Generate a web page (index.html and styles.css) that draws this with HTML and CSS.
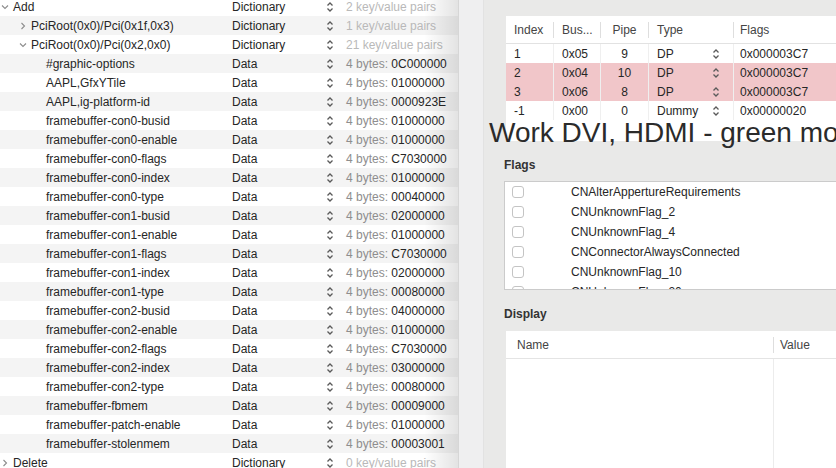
FILE: index.html
```html
<!DOCTYPE html>
<html lang="en">
<head>
    <meta charset="UTF-8">
    <title>Device Properties</title>
    <link rel="stylesheet" href="styles.css">
</head>
<body>
    <svg class="defs" width="0" height="0">
        <symbol id="updown" viewBox="0 0 8 12">
            <polyline points="1.5,4.5 4,2 6.5,4.5" fill="none" stroke="#5a5a5a" stroke-width="1.3"/>
            <polyline points="1.5,7.5 4,10 6.5,7.5" fill="none" stroke="#5a5a5a" stroke-width="1.3"/>
        </symbol>
        <symbol id="chev-right" viewBox="0 0 8 8">
            <polyline points="2.5,1 5.5,4 2.5,7" fill="none" stroke="#8c8c8c" stroke-width="1.1"/>
        </symbol>
        <symbol id="chev-down" viewBox="0 0 8 8">
            <polyline points="1,2.5 4,5.5 7,2.5" fill="none" stroke="#8c8c8c" stroke-width="1.1"/>
        </symbol>
    </svg>

    <div class="plist">
        <div class="row">
            <div class="key lvl0"><svg class="chev"><use href="#chev-down"/></svg>Add</div>
            <div class="type">Dictionary</div>
            <div class="step"><svg><use href="#updown"/></svg></div>
            <div class="val faint">2 key/value pairs</div>
        </div>
        <div class="row">
            <div class="key lvl1"><svg class="chev"><use href="#chev-right"/></svg>PciRoot(0x0)/Pci(0x1f,0x3)</div>
            <div class="type">Dictionary</div>
            <div class="step"><svg><use href="#updown"/></svg></div>
            <div class="val faint">1 key/value pairs</div>
        </div>
        <div class="row">
            <div class="key lvl1"><svg class="chev"><use href="#chev-down"/></svg>PciRoot(0x0)/Pci(0x2,0x0)</div>
            <div class="type">Dictionary</div>
            <div class="step"><svg><use href="#updown"/></svg></div>
            <div class="val faint">21 key/value pairs</div>
        </div>
        <div class="row">
            <div class="key lvl2">#graphic-options</div>
            <div class="type">Data</div>
            <div class="step"><svg><use href="#updown"/></svg></div>
            <div class="val"><span class="dim">4 bytes:</span> 0C000000</div>
        </div>
        <div class="row">
            <div class="key lvl2">AAPL,GfxYTile</div>
            <div class="type">Data</div>
            <div class="step"><svg><use href="#updown"/></svg></div>
            <div class="val"><span class="dim">4 bytes:</span> 01000000</div>
        </div>
        <div class="row">
            <div class="key lvl2">AAPL,ig-platform-id</div>
            <div class="type">Data</div>
            <div class="step"><svg><use href="#updown"/></svg></div>
            <div class="val"><span class="dim">4 bytes:</span> 0000923E</div>
        </div>
        <div class="row">
            <div class="key lvl2">framebuffer-con0-busid</div>
            <div class="type">Data</div>
            <div class="step"><svg><use href="#updown"/></svg></div>
            <div class="val"><span class="dim">4 bytes:</span> 01000000</div>
        </div>
        <div class="row">
            <div class="key lvl2">framebuffer-con0-enable</div>
            <div class="type">Data</div>
            <div class="step"><svg><use href="#updown"/></svg></div>
            <div class="val"><span class="dim">4 bytes:</span> 01000000</div>
        </div>
        <div class="row">
            <div class="key lvl2">framebuffer-con0-flags</div>
            <div class="type">Data</div>
            <div class="step"><svg><use href="#updown"/></svg></div>
            <div class="val"><span class="dim">4 bytes:</span> C7030000</div>
        </div>
        <div class="row">
            <div class="key lvl2">framebuffer-con0-index</div>
            <div class="type">Data</div>
            <div class="step"><svg><use href="#updown"/></svg></div>
            <div class="val"><span class="dim">4 bytes:</span> 01000000</div>
        </div>
        <div class="row">
            <div class="key lvl2">framebuffer-con0-type</div>
            <div class="type">Data</div>
            <div class="step"><svg><use href="#updown"/></svg></div>
            <div class="val"><span class="dim">4 bytes:</span> 00040000</div>
        </div>
        <div class="row">
            <div class="key lvl2">framebuffer-con1-busid</div>
            <div class="type">Data</div>
            <div class="step"><svg><use href="#updown"/></svg></div>
            <div class="val"><span class="dim">4 bytes:</span> 02000000</div>
        </div>
        <div class="row">
            <div class="key lvl2">framebuffer-con1-enable</div>
            <div class="type">Data</div>
            <div class="step"><svg><use href="#updown"/></svg></div>
            <div class="val"><span class="dim">4 bytes:</span> 01000000</div>
        </div>
        <div class="row">
            <div class="key lvl2">framebuffer-con1-flags</div>
            <div class="type">Data</div>
            <div class="step"><svg><use href="#updown"/></svg></div>
            <div class="val"><span class="dim">4 bytes:</span> C7030000</div>
        </div>
        <div class="row">
            <div class="key lvl2">framebuffer-con1-index</div>
            <div class="type">Data</div>
            <div class="step"><svg><use href="#updown"/></svg></div>
            <div class="val"><span class="dim">4 bytes:</span> 02000000</div>
        </div>
        <div class="row">
            <div class="key lvl2">framebuffer-con1-type</div>
            <div class="type">Data</div>
            <div class="step"><svg><use href="#updown"/></svg></div>
            <div class="val"><span class="dim">4 bytes:</span> 00080000</div>
        </div>
        <div class="row">
            <div class="key lvl2">framebuffer-con2-busid</div>
            <div class="type">Data</div>
            <div class="step"><svg><use href="#updown"/></svg></div>
            <div class="val"><span class="dim">4 bytes:</span> 04000000</div>
        </div>
        <div class="row">
            <div class="key lvl2">framebuffer-con2-enable</div>
            <div class="type">Data</div>
            <div class="step"><svg><use href="#updown"/></svg></div>
            <div class="val"><span class="dim">4 bytes:</span> 01000000</div>
        </div>
        <div class="row">
            <div class="key lvl2">framebuffer-con2-flags</div>
            <div class="type">Data</div>
            <div class="step"><svg><use href="#updown"/></svg></div>
            <div class="val"><span class="dim">4 bytes:</span> C7030000</div>
        </div>
        <div class="row">
            <div class="key lvl2">framebuffer-con2-index</div>
            <div class="type">Data</div>
            <div class="step"><svg><use href="#updown"/></svg></div>
            <div class="val"><span class="dim">4 bytes:</span> 03000000</div>
        </div>
        <div class="row">
            <div class="key lvl2">framebuffer-con2-type</div>
            <div class="type">Data</div>
            <div class="step"><svg><use href="#updown"/></svg></div>
            <div class="val"><span class="dim">4 bytes:</span> 00080000</div>
        </div>
        <div class="row">
            <div class="key lvl2">framebuffer-fbmem</div>
            <div class="type">Data</div>
            <div class="step"><svg><use href="#updown"/></svg></div>
            <div class="val"><span class="dim">4 bytes:</span> 00009000</div>
        </div>
        <div class="row">
            <div class="key lvl2">framebuffer-patch-enable</div>
            <div class="type">Data</div>
            <div class="step"><svg><use href="#updown"/></svg></div>
            <div class="val"><span class="dim">4 bytes:</span> 01000000</div>
        </div>
        <div class="row">
            <div class="key lvl2">framebuffer-stolenmem</div>
            <div class="type">Data</div>
            <div class="step"><svg><use href="#updown"/></svg></div>
            <div class="val"><span class="dim">4 bytes:</span> 00003001</div>
        </div>
        <div class="row">
            <div class="key lvl0"><svg class="chev"><use href="#chev-right"/></svg>Delete</div>
            <div class="type">Dictionary</div>
            <div class="step"><svg><use href="#updown"/></svg></div>
            <div class="val faint">0 key/value pairs</div>
        </div>
    </div>

    <div class="gutter"></div>

    <div class="editor">
        <div class="ports">
            <div class="prow head">
                <div class="c-index">Index</div>
                <div class="c-bus">Bus...</div>
                <div class="c-pipe">Pipe</div>
                <div class="c-type">Type</div>
                <div class="c-flags">Flags</div>
            </div>
            <div class="prow">
                <div class="c-index">1</div>
                <div class="c-bus">0x05</div>
                <div class="c-pipe">9</div>
                <div class="c-type">DP<svg><use href="#updown"/></svg></div>
                <div class="c-flags">0x000003C7</div>
            </div>
            <div class="prow marked">
                <div class="c-index">2</div>
                <div class="c-bus">0x04</div>
                <div class="c-pipe">10</div>
                <div class="c-type">DP<svg><use href="#updown"/></svg></div>
                <div class="c-flags">0x000003C7</div>
            </div>
            <div class="prow marked">
                <div class="c-index">3</div>
                <div class="c-bus">0x06</div>
                <div class="c-pipe">8</div>
                <div class="c-type">DP<svg><use href="#updown"/></svg></div>
                <div class="c-flags">0x000003C7</div>
            </div>
            <div class="prow">
                <div class="c-index">-1</div>
                <div class="c-bus">0x00</div>
                <div class="c-pipe">0</div>
                <div class="c-type">Dummy<svg><use href="#updown"/></svg></div>
                <div class="c-flags">0x00000020</div>
            </div>
        </div>

        <div class="note">Work DVI, HDMI - green mo</div>

        <div class="section-title">Flags</div>
        <div class="flags">
            <label class="flag"><span class="check"></span>CNAlterAppertureRequirements</label>
            <label class="flag"><span class="check"></span>CNUnknownFlag_2</label>
            <label class="flag"><span class="check"></span>CNUnknownFlag_4</label>
            <label class="flag"><span class="check"></span>CNConnectorAlwaysConnected</label>
            <label class="flag"><span class="check"></span>CNUnknownFlag_10</label>
            <label class="flag"><span class="check"></span>CNUnknownFlag_20</label>
        </div>

        <div class="section-title display-title">Display</div>
        <div class="display">
            <div class="drow head">
                <div class="d-name">Name</div>
                <div class="d-value">Value</div>
            </div>
            <div class="drow body">
                <div class="d-name"></div>
                <div class="d-value"></div>
            </div>
        </div>
    </div>
</body>
</html>
```

FILE: styles.css
```css
body {
    margin: 0;
    height: 468px;
    display: flex;
    overflow: hidden;
    font-family: "Liberation Sans", Arial, sans-serif;
    font-size: 12px;
    color: #262626;
    background: #e9e9e8;
}

.defs {
    position: absolute;
}

/* left: plist tree */
.plist {
    position: relative;
    width: 458px;
    flex: none;
    margin-top: -3px;
    background: #fff;
    border-right: 1px solid #d6d6d6;
}

.plist::after {
    content: "";
    position: absolute;
    top: 0;
    right: 0;
    bottom: 0;
    width: 34px;
    background: linear-gradient(to right, rgba(0, 0, 0, 0), rgba(0, 0, 0, 0.11));
}

.row {
    height: 19px;
    display: grid;
    grid-template-columns: 232px 94px 20px 1fr;
    align-items: center;
    white-space: nowrap;
}

.row:nth-child(even) {
    background: #f4f4f4;
}

.key {
    display: flex;
    align-items: center;
}

.chev {
    width: 8px;
    height: 8px;
    margin-right: 4px;
}

.lvl0 { padding-left: 1px; }
.lvl1 { padding-left: 19px; }
.lvl2 { padding-left: 46px; }

.step svg {
    display: block;
    width: 8px;
    height: 12px;
}

.val .dim {
    color: #8e8e8e;
}

.val.faint {
    color: #b9b9b9;
}

.gutter {
    width: 24px;
    flex: none;
    background: #efeff0;
    border-right: 1px solid #e2e2e2;
}

/* right: editor */
.editor {
    position: relative;
    flex: 1;
    padding: 16px 0 0 20px;
    display: flex;
    flex-direction: column;
    min-width: 0;
    overflow: hidden;
}

.ports {
    margin-left: 2px;
    margin-right: -30px;
    height: 125px;
    background: #fff;
    flex: none;
}

.prow {
    height: 19px;
    display: grid;
    grid-template-columns: 48px 47px 48px 85px 1fr;
    align-items: center;
    white-space: nowrap;
}

.prow > div {
    height: 100%;
    display: flex;
    align-items: center;
    padding-left: 8px;
    border-right: 1px solid #efefef;
}

.prow > div:last-child {
    border-right: none;
}

.prow.head {
    height: 27px;
    color: #444;
    border-bottom: 1px solid #e2e2e2;
}

.prow.head > div {
    height: 16px;
    border-right-color: #dedede;
}

.prow .c-pipe {
    justify-content: center;
    padding-left: 0;
}

.prow .c-type {
    justify-content: space-between;
    padding-right: 13px;
}

.c-type svg {
    width: 8px;
    height: 12px;
}

.prow .c-flags {
    padding-left: 6px;
}

.prow.marked {
    background: #f1c6c9;
}

.note {
    position: absolute;
    left: 5px;
    top: 117px;
    font-size: 28px;
    line-height: 32px;
    color: #2b2b2b;
    white-space: nowrap;
}

.section-title {
    margin-top: 16px;
    line-height: 16px;
    font-weight: bold;
    color: #333;
}

.flags {
    margin-top: 8px;
    margin-right: -30px;
    height: 107px;
    background: #fff;
    border: 1px solid #cbcbcb;
    overflow: hidden;
    flex: none;
}

.flag {
    height: 20px;
    display: flex;
    align-items: center;
    padding-left: 7px;
}

.check {
    width: 10px;
    height: 10px;
    border: 1px solid #c4c4c4;
    border-radius: 3px;
    margin-right: 47px;
    background: #fff;
}

.display-title {
    margin-top: 16px;
}

.display {
    margin-top: 9px;
    margin-left: 2px;
    margin-right: -30px;
    flex: 1;
    background: #fff;
    display: flex;
    flex-direction: column;
}

.drow {
    display: grid;
    grid-template-columns: 268px 1fr;
}

.drow.head {
    height: 27px;
    align-items: center;
    color: #444;
    border-bottom: 1px solid #e4e4e4;
}

.drow.head .d-name {
    padding-left: 11px;
    height: 16px;
    line-height: 16px;
    border-right: 1px solid #dedede;
}

.drow.head .d-value {
    padding-left: 6px;
}

.drow.body {
    flex: 1;
}

.drow.body .d-name {
    border-right: 1px solid #ececec;
}
```
